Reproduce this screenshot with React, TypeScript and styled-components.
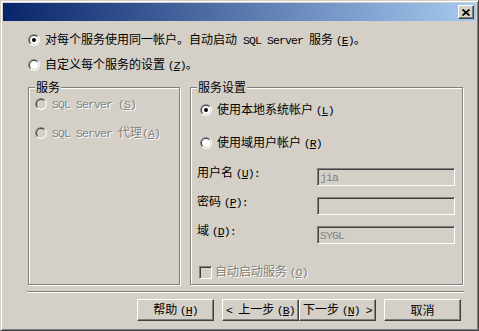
import React from "react";
import styled, { createGlobalStyle } from "styled-components";

const Global = createGlobalStyle`
  html, body { margin: 0; padding: 0; background: #d4d0c8; }
  body {
    font-family: "Noto Sans CJK SC", "Noto Sans", sans-serif;
    font-size: 12px;
    line-height: 14px;
    color: #000;
  }
  #root { width: 479px; height: 331px; }
`;

const Window = styled.div`
  box-sizing: border-box;
  width: 479px;
  height: 331px;
  display: flex;
  flex-direction: column;
  background: #d4d0c8;
  border: 1px solid;
  border-color: #d4d0c8 #404040 #404040 #d4d0c8;
  box-shadow: inset 1px 1px 0 #fff, inset -1px -1px 0 #808080;
  padding: 2px;
`;

const TitleBar = styled.div`
  height: 18px;
  flex: none;
  display: flex;
  justify-content: flex-end;
  align-items: center;
  padding-right: 2px;
  background: linear-gradient(to right, #0a246a, #a6caf0);
`;

const CloseButton = styled.div`
  box-sizing: border-box;
  width: 16px;
  height: 14px;
  display: flex;
  align-items: center;
  justify-content: center;
  background: #d4d0c8;
  border: 1px solid;
  border-color: #fff #404040 #404040 #fff;
  box-shadow: inset -1px -1px 0 #808080;
`;

const Latin = styled.span`
  font-family: "Liberation Mono", monospace;
  font-size: 11.5px;
  letter-spacing: -0.9px;
`;

const Options = styled.div`
  display: flex;
  flex-direction: column;
  gap: 9px;
  margin-top: 11px;
  padding-left: 25px;
`;

const RadioRow = styled.div<{ $disabled?: boolean; $indent?: number }>`
  display: flex;
  align-items: center;
  gap: 5px;
  height: 16px;
  white-space: pre;
  margin-left: ${(p) => p.$indent ?? 0}px;
  color: ${(p) => (p.$disabled ? "#808080" : "#000")};
  text-shadow: ${(p) => (p.$disabled ? "1px 1px 0 #fff" : "none")};
`;

const Groups = styled.div`
  display: flex;
  gap: 10px;
  margin-top: 14px;
  padding-left: 25px;
`;

const GroupBox = styled.div<{ $w: number }>`
  position: relative;
  box-sizing: border-box;
  width: ${(p) => p.$w}px;
  height: 198px;
  border: 1px solid #808080;
  box-shadow: inset 1px 1px 0 #fff, 1px 1px 0 #fff;
  display: flex;
  flex-direction: column;
`;

const Legend = styled.span`
  position: absolute;
  top: -8px;
  left: 6px;
  padding: 0 1px;
  background: #d4d0c8;
  line-height: 14px;
  white-space: nowrap;
`;

const LeftBody = styled.div`
  display: flex;
  flex-direction: column;
  gap: 13px;
  padding: 8px 0 0 6px;
`;

const RightBody = styled.div`
  display: flex;
  flex-direction: column;
  padding: 14px 7px 0 6px;
`;

const RadioStack = styled.div`
  display: flex;
  flex-direction: column;
  gap: 17px;
`;

const Fields = styled.div`
  display: grid;
  grid-template-columns: 120px 138px;
  row-gap: 11px;
  align-items: start;
  margin-top: 17px;
`;

const FieldLabel = styled.span`
  line-height: 12px;
  margin-top: -2px;
  white-space: pre;
`;

const TextBox = styled.input`
  box-sizing: border-box;
  width: 138px;
  height: 18px;
  margin: 0;
  padding: 0 2px;
  background: #d4d0c8;
  border: 1px solid;
  border-color: #808080 #fff #fff #808080;
  box-shadow: inset 1px 1px 0 #404040, inset -1px -1px 0 #d4d0c8;
  outline: none;
  color: #808080;
  font-family: "Liberation Mono", monospace;
  font-size: 11.5px;
  letter-spacing: -0.9px;
`;

const CheckRow = styled.div`
  display: flex;
  align-items: center;
  gap: 3px;
  margin: 20px 0 0 2px;
  color: #808080;
  text-shadow: 1px 1px 0 #fff;
  white-space: pre;
`;

const CheckBox = styled.span`
  box-sizing: border-box;
  width: 13px;
  height: 13px;
  flex: none;
  background: #d4d0c8;
  border: 1px solid;
  border-color: #808080 #fff #fff #808080;
  box-shadow: inset 1px 1px 0 #404040, inset -1px -1px 0 #d4d0c8;
`;

const Separator = styled.div`
  height: 0;
  border-top: 1px solid #808080;
  border-bottom: 1px solid #fff;
  margin: 6px 12px 0 24px;
`;

const ButtonRow = styled.div`
  display: flex;
  justify-content: flex-end;
  gap: 8px;
  margin-top: 6px;
  padding-right: 15px;
`;

const NavPair = styled.div`
  display: flex;
`;

const Button = styled.button`
  box-sizing: border-box;
  width: 77px;
  height: 22px;
  margin: 0;
  padding: 0;
  display: flex;
  align-items: center;
  justify-content: center;
  white-space: pre;
  background: #d4d0c8;
  color: #000;
  border: 1px solid;
  border-color: #fff #404040 #404040 #fff;
  box-shadow: inset -1px -1px 0 #808080;
  font-family: "Noto Sans CJK SC", sans-serif;
  font-size: 12px;
  line-height: 14px;
`;

const Radio: React.FC<{ checked?: boolean; disabled?: boolean }> = ({ checked, disabled }) => (
  <svg width="12" height="12" viewBox="0 0 12 12" style={{ flex: "none" }}>
    <circle cx="6" cy="6" r="6" fill="#fff" />
    <path d="M1.757 10.243 A6 6 0 0 1 10.243 1.757 Z" fill="#808080" />
    <circle cx="6" cy="6" r="5" fill="#d4d0c8" />
    <path d="M2.464 9.536 A5 5 0 0 1 9.536 2.464 Z" fill="#404040" />
    <circle cx="6" cy="6" r="4" fill={disabled ? "#d4d0c8" : "#fff"} />
    {checked && <circle cx="6" cy="6" r="2" fill={disabled ? "#808080" : "#000"} />}
  </svg>
);

const M: React.FC<{ k: string; tail?: string }> = ({ k, tail = "" }) => (
  <Latin>
    (<u>{k}</u>){tail}
  </Latin>
);

export default function App() {
  return (
    <>
      <Global />
      <Window>
        <TitleBar>
          <CloseButton>
            <svg width="8" height="7" viewBox="0 0 8 7">
              <path d="M0.5 0.5 L7.5 6.5 M7.5 0.5 L0.5 6.5" stroke="#000" strokeWidth="1.7" />
            </svg>
          </CloseButton>
        </TitleBar>

        <Options>
          <RadioRow>
            <Radio checked />
            <span>
              对每个服务使用同一帐户。自动启动<Latin> SQL Server </Latin>服务 <M k="E" />。
            </span>
          </RadioRow>
          <RadioRow>
            <Radio />
            <span>
              自定义每个服务的设置 <M k="Z" />。
            </span>
          </RadioRow>
        </Options>

        <Groups>
          <GroupBox $w={152}>
            <Legend>服务</Legend>
            <LeftBody>
              <RadioRow $disabled>
                <Radio disabled />
                <span>
                  <Latin>SQL Server </Latin>
                  <M k="S" />
                </span>
              </RadioRow>
              <RadioRow $disabled>
                <Radio disabled />
                <span>
                  <Latin>SQL Server </Latin>代理<M k="A" />
                </span>
              </RadioRow>
            </LeftBody>
          </GroupBox>

          <GroupBox $w={273}>
            <Legend>服务设置</Legend>
            <RightBody>
              <RadioStack>
                <RadioRow $indent={3}>
                  <Radio checked />
                  <span>
                    使用本地系统帐户 <M k="L" />
                  </span>
                </RadioRow>
                <RadioRow $indent={3}>
                  <Radio />
                  <span>
                    使用域用户帐户 <M k="R" />
                  </span>
                </RadioRow>
              </RadioStack>

              <Fields>
                <FieldLabel>
                  用户名 <M k="U" tail=":" />
                </FieldLabel>
                <TextBox readOnly value="jia" />
                <FieldLabel>
                  密码 <M k="P" tail=":" />
                </FieldLabel>
                <TextBox readOnly value="" />
                <FieldLabel>
                  域 <M k="D" tail=":" />
                </FieldLabel>
                <TextBox readOnly value="SYGL" />
              </Fields>

              <CheckRow>
                <CheckBox />
                <span>
                  自动启动服务 <M k="O" />
                </span>
              </CheckRow>
            </RightBody>
          </GroupBox>
        </Groups>

        <Separator />

        <ButtonRow>
          <Button>
            <span>
              帮助 <M k="H" />
            </span>
          </Button>
          <NavPair>
            <Button>
              <span>
                <Latin>&lt; </Latin>上一步 <M k="B" />
              </span>
            </Button>
            <Button>
              <span>
                下一步 <M k="N" />
                <Latin> &gt;</Latin>
              </span>
            </Button>
          </NavPair>
          <Button>
            <span>取消</span>
          </Button>
        </ButtonRow>
      </Window>
    </>
  );
}
